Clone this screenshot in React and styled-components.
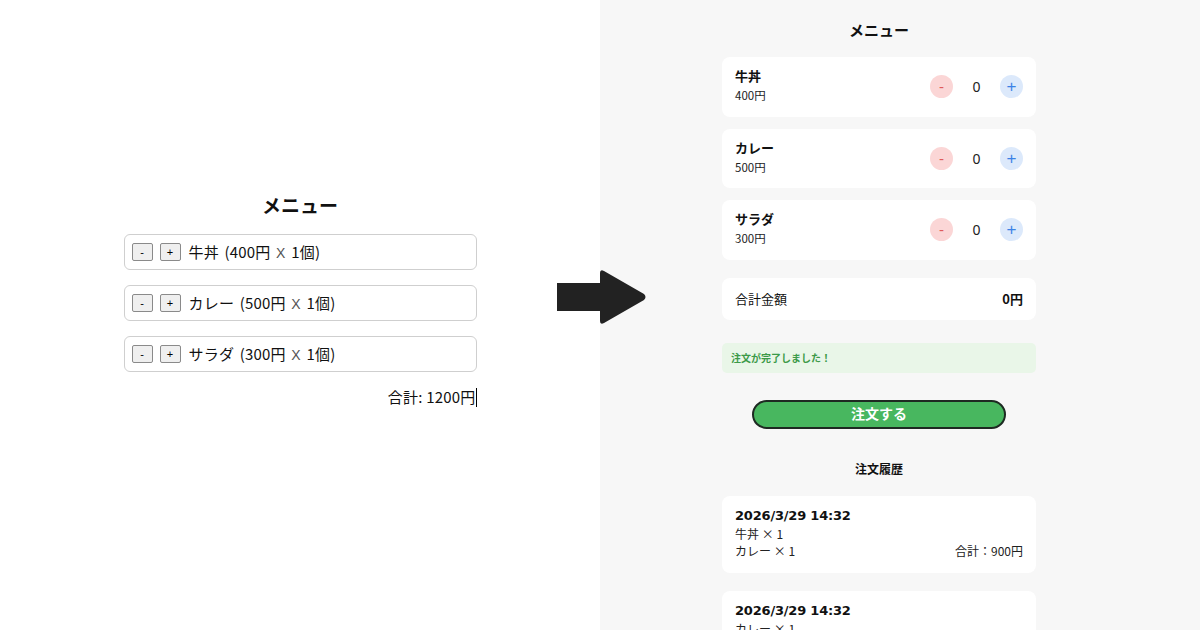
import styled, { createGlobalStyle } from 'styled-components'

const GlobalStyle = createGlobalStyle`
  html, body {
    margin: 0;
    padding: 0;
    height: 630px;
    overflow: hidden;
  }
  body {
    font-family: "Noto Sans CJK JP", "Noto Sans", sans-serif;
    color: #111;
  }
`;

const Page = styled.div`
  position: relative;
  display: grid;
  grid-template-columns: 600px 600px;
  width: 1200px;
  height: 630px;
`;

const Before = styled.div`
  background: #fff;
  display: flex;
  flex-direction: column;
  align-items: center;
  padding-top: 193px;
`;

const OldMenu = styled.div`
  width: 353px;
  display: flex;
  flex-direction: column;
`;

const OldTitle = styled.h1`
  margin: 0 0 17px;
  font-size: 19px;
  line-height: 24px;
  font-weight: 700;
  text-align: center;
`;

const OldList = styled.div`
  display: flex;
  flex-direction: column;
  gap: 15px;
`;

const OldRow = styled.div`
  height: 36px;
  box-sizing: border-box;
  border: 1px solid #cfcfcf;
  border-radius: 6px;
  display: flex;
  align-items: center;
  padding-left: 7px;
  gap: 7px;
  font-size: 15px;
`;

const OldButton = styled.button`
  width: 21px;
  height: 18px;
  padding: 0;
  border: 1px solid #8a8a8a;
  border-radius: 2px;
  background: #efefef;
  font-size: 11px;
  line-height: 1;
  font-family: "Liberation Sans", sans-serif;
  color: #000;
`;

const OldLabel = styled.span`
  margin-left: 1px;
  line-height: 20px;
  word-spacing: 2px;
  letter-spacing: 0.2px;
`;

const Cross = styled.span`
  color: #555;
  font-family: "Liberation Sans", sans-serif;
  font-size: 14px;
`;

const OldTotal = styled.div`
  margin-top: 15px;
  display: flex;
  justify-content: flex-end;
  align-items: center;
  font-size: 15px;
  line-height: 20px;
  letter-spacing: 0.2px;
`;

const Caret = styled.span`
  display: inline-block;
  width: 1px;
  height: 19px;
  background: #000;
`;

const ArrowMark = styled.svg`
  position: absolute;
  left: 556px;
  top: 269px;
`;

const After = styled.div`
  background: #f7f7f7;
  padding-left: 122px;
`;

const Panel = styled.div`
  width: 314px;
  display: flex;
  flex-direction: column;
`;

const Heading = styled.h2`
  margin: 20px 0 0;
  font-size: 15px;
  line-height: 20px;
  font-weight: 700;
  text-align: center;
`;

const ItemList = styled.div`
  margin-top: 17px;
  display: flex;
  flex-direction: column;
  gap: 12px;
`;

const Card = styled.div`
  background: #fff;
  border-radius: 8px;
  box-sizing: border-box;
  padding: 0 13px;
`;

const ItemCard = styled(Card)`
  height: 59.6px;
  display: flex;
  align-items: center;
  justify-content: space-between;
`;

const ItemInfo = styled.div`
  display: flex;
  flex-direction: column;
  margin-top: -3px;
`;

const ItemName = styled.span`
  font-size: 13px;
  font-weight: 700;
  line-height: 18px;
`;

const ItemPrice = styled.span`
  margin-top: 2px;
  font-size: 11.5px;
  line-height: 16px;
  color: #222;
`;

const Stepper = styled.div`
  display: flex;
  align-items: center;
`;

const Round = styled.button`
  width: 23px;
  height: 23px;
  border-radius: 50%;
  border: none;
  padding: 0;
  background: ${p => (p.$plus ? '#dce9fb' : '#fbd6d6')};
  color: ${p => (p.$plus ? '#3b82e6' : '#e05a5a')};
  font-family: "Liberation Sans", sans-serif;
  font-size: ${p => (p.$plus ? '17px' : '15px')};
  line-height: 23px;
`;

const Count = styled.span`
  width: 47px;
  text-align: center;
  font-size: 14px;
  color: #222;
  font-family: "Noto Sans", sans-serif;
`;

const TotalCard = styled(Card)`
  margin-top: 18px;
  height: 42px;
  display: flex;
  align-items: center;
  justify-content: space-between;
  font-size: 13px;
`;

const TotalValue = styled.span`
  font-weight: 700;
`;

const Notice = styled.div`
  margin-top: 23px;
  height: 30px;
  background: #e9f6e8;
  border-radius: 5px;
  display: flex;
  align-items: center;
  padding-left: 9px;
  font-size: 10px;
  font-weight: 700;
  color: #3c9a48;
`;

const OrderButton = styled.button`
  margin: 27px auto 0;
  width: 254px;
  height: 29px;
  border-radius: 15px;
  border: 2px solid #1e2a22;
  background: #48b75f;
  color: #fff;
  font-family: "Noto Sans CJK JP", sans-serif;
  font-size: 14px;
  font-weight: 700;
  line-height: 1;
  padding-bottom: 3px;
`;

const SubHeading = styled.h3`
  margin: 32px 0 0;
  font-size: 12px;
  line-height: 16px;
  font-weight: 700;
  text-align: center;
`;

const HistoryList = styled.div`
  margin-top: 19px;
  display: flex;
  flex-direction: column;
  gap: 18px;
`;

const HistoryCard = styled(Card)`
  height: 77px;
  padding-top: 11px;
`;

const HistoryDate = styled.div`
  font-size: 13px;
  font-weight: 700;
  line-height: 18px;
  font-family: "DejaVu Sans", "Noto Sans CJK JP", sans-serif;
  letter-spacing: -0.2px;
`;

const HistoryLine = styled.div`
  display: flex;
  justify-content: space-between;
  font-size: 12px;
  line-height: 17px;
  color: #222;
  &:first-of-type {
    margin-top: 3px;
  }
`;

const items = [
  { name: '牛丼', price: 400 },
  { name: 'カレー', price: 500 },
  { name: 'サラダ', price: 300 },
];

const history = [
  { date: '2026/3/29 14:32', lines: ['牛丼 × 1', 'カレー × 1'], total: 900 },
  { date: '2026/3/29 14:32', lines: ['カレー × 1', 'サラダ × 1'], total: 800 },
];

export default function App() {
  return (
    <>
      <GlobalStyle />
      <Page>
        <Before>
          <OldMenu>
            <OldTitle>メニュー</OldTitle>
            <OldList>
              {items.map(item => (
                <OldRow key={item.name}>
                  <OldButton>-</OldButton>
                  <OldButton>+</OldButton>
                  <OldLabel>
                    {item.name} ({item.price}円 <Cross>X</Cross> 1個)
                  </OldLabel>
                </OldRow>
              ))}
            </OldList>
            <OldTotal>
              合計: 1200円<Caret />
            </OldTotal>
          </OldMenu>
        </Before>

        <After>
          <Panel>
            <Heading>メニュー</Heading>
            <ItemList>
              {items.map(item => (
                <ItemCard key={item.name}>
                  <ItemInfo>
                    <ItemName>{item.name}</ItemName>
                    <ItemPrice>{item.price}円</ItemPrice>
                  </ItemInfo>
                  <Stepper>
                    <Round>-</Round>
                    <Count>0</Count>
                    <Round $plus>+</Round>
                  </Stepper>
                </ItemCard>
              ))}
            </ItemList>
            <TotalCard>
              <span>合計金額</span>
              <TotalValue>0円</TotalValue>
            </TotalCard>
            <Notice>注文が完了しました！</Notice>
            <OrderButton>注文する</OrderButton>
            <SubHeading>注文履歴</SubHeading>
            <HistoryList>
              {history.map((h, i) => (
                <HistoryCard key={i}>
                  <HistoryDate>{h.date}</HistoryDate>
                  {h.lines.map((line, j) => (
                    <HistoryLine key={j}>
                      <span>{line}</span>
                      {j === h.lines.length - 1 && <span>合計：{h.total}円</span>}
                    </HistoryLine>
                  ))}
                </HistoryCard>
              ))}
            </HistoryList>
          </Panel>
        </After>

        <ArrowMark width="92" height="56" viewBox="0 0 92 56">
          <path
            d="M1 14 H44 V4 Q44 0 48 2 L88 25 Q91 28 88 31 L48 54 Q44 56 44 52 V42 H1 Z"
            fill="#222"
          />
        </ArrowMark>
      </Page>
    </>
  );
}
